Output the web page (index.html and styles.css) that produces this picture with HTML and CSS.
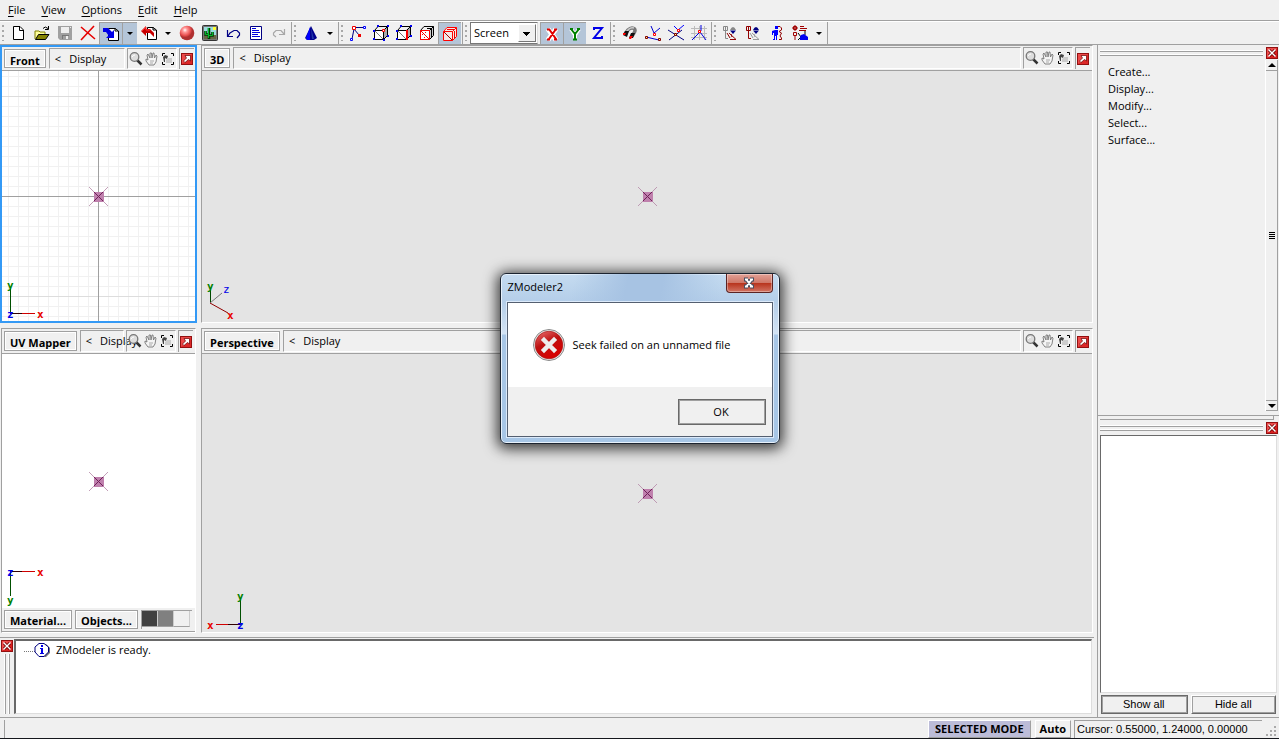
FILE: index.html
```html
<!DOCTYPE html>
<html lang="en">
<head>
<meta charset="utf-8">
<title>ZModeler2</title>
<link rel="stylesheet" href="styles.css">
</head>
<body>
<svg class="defs" aria-hidden="true">
  <symbol id="new" viewBox="0 0 16 16"><path d="M2.500 1.500H9L12.500 5V14.500H2.500Z" fill="#fff" stroke="#000"/><path d="M8.500 1.500V5.500H12.500" fill="none" stroke="#000"/></symbol>
  <symbol id="open" viewBox="0 0 16 16"><path d="M1 14V6H5L6 7H11V9" fill="#ffff9c" stroke="#808000"/><path d="M1.500 14.500L4.500 9.500H15L11.500 14.500Z" fill="#848200" stroke="#000"/><path d="M9 3.500Q11 0.500 14 3.500M14.500 1V4.500H11" fill="none" stroke="#000"/></symbol>
  <symbol id="save" viewBox="0 0 16 16"><path d="M1 1H15V15H3L1 13Z" fill="#a0a0a0"/><path d="M4 2H12V8H4Z" fill="#efefef"/><path d="M13 2h1v1h-1z M9 11h2v3H9z" fill="#efefef"/><path d="M5 10H12V11H6V14H5Z" fill="#777"/></symbol>
  <symbol id="del" viewBox="0 0 16 16"><path d="M1 2L15 14M14 1L1 15" stroke="#e60000" stroke-width="1.600" fill="none"/></symbol>
  <symbol id="imp" viewBox="0 0 16 16"><path d="M5.500 2.500H12L15.500 5V14.500H5.500Z" fill="#fff" stroke="#000"/><path d="M12 2V5H15" fill="none" stroke="#000"/><path d="M0 2H5L9 6L11 4V12H3L5.500 9.500L3 6H0Z" fill="#0000e8"/></symbol>
  <symbol id="exp" viewBox="0 0 16 16"><path d="M6.500 2.500H12L15.500 5V14.500H6.500Z" fill="#fff" stroke="#000"/><path d="M12 2V5H15" fill="none" stroke="#000"/><path d="M0 6L5 1V4H9L13 8V12L9 8H5V11Z" fill="#c80000"/><path d="M1 6L5 2V5H9" fill="none" stroke="#f33"/></symbol>
  <radialGradient id="ball" cx="36%" cy="30%"><stop offset="0" stop-color="#fff"/><stop offset=".3" stop-color="#ff9a9a"/><stop offset=".75" stop-color="#e85050"/><stop offset="1" stop-color="#b03030"/></radialGradient>
  <symbol id="sphere" viewBox="0 0 16 16"><circle cx="8" cy="8" r="7.300" fill="url(#ball)"/></symbol>
  <symbol id="cactus" viewBox="0 0 16 16"><rect x=".5" y=".5" width="15" height="15" rx="1" fill="#777" stroke="#333"/><path d="M2 2H14V10H2Z" fill="#9dd"/><path d="M2 10H14V14H2Z" fill="#664"/><path d="M11 2h3v3h-3z" fill="#ff3"/><path d="M7 14V3M7 10.500H10.500V7M7 9.500H3.500V6" stroke="#003800" stroke-width="2.600" fill="none"/><path d="M6.500 13V3M3.500 6V9.500H7M10.500 7V10.500H7" stroke="#00b828" fill="none"/></symbol>
  <symbol id="undo" viewBox="0 0 16 16"><path d="M2.500 5V11.500H8M3 11L5 8L9 5.500H12L14.500 8V10L12 13" fill="none" stroke="#000084" stroke-width="1.200"/></symbol>
  <symbol id="redo" viewBox="0 0 16 16"><path d="M13.500 4V9.500H8M13 9L10 5.500H5L2.500 8V10L5 12" fill="none" stroke="#a8a8a8" stroke-width="1.200"/></symbol>
  <symbol id="list" viewBox="0 0 16 16"><path d="M2.500 1.500H13.500V14.500H2.500Z" fill="#fff" stroke="#000084"/><path d="M4 3.500H8M4 5.500H11M4 7.500H12M4 9.500H10M4 11.500H12" stroke="#0000e0"/></symbol>
  <symbol id="cone" viewBox="0 0 16 16"><path d="M8 1L14 13L11 15H4L2 13Z" fill="#00008c"/><path d="M7 2V15H4L3 13Z" fill="#0000ff"/><path d="M8 3L11 14H9Z" fill="#2238a8"/></symbol>
  <symbol id="nodes" viewBox="0 0 16 16"><path d="M4 2.500H14M4 4L9 10M4 4L2 14" fill="none" stroke="#000080"/><path d="M2.500 1.500h3v3h-3z" fill="#fff" stroke="#e00"/><path d="M13.500 1.500h2v2h-2zM.5 13.500h2v2h-2z" fill="#fff" stroke="#00f"/><path d="M8 9h3v3H8z" fill="#e00"/></symbol>
  <symbol id="cube" viewBox="0 0 16 16"><path d="M1.500 5.500L5 1.500H14.500V10.500L10.500 14.500H1.500ZM1.500 5.500H10.500V14.500M10.500 5.500L14.500 1.500" fill="none"/></symbol>
  <symbol id="cubev" viewBox="0 0 16 16"><path d="M1 5H11V15H1Z" fill="#fff"/><path d="M10 5L15 1V10L10 14Z" fill="#aaa"/><use href="#cube" stroke="#000"/><path d="M2 6L10 14" stroke="#777"/><path d="M4 0h2v2H4zM14 0h2v2h-2zM0 5h2v2H0zM0 13h2v2H0zM10 14h2v2h-2zM14 10h2v2h-2z" fill="#00e"/><path d="M9.500 4.500h2v2h-2z" fill="#fff" stroke="#f00"/></symbol>
  <symbol id="cubee" viewBox="0 0 16 16"><path d="M1 5H11V15H1Z" fill="#fff"/><path d="M10 5L15 1V10L10 14Z" fill="#aaa"/><use href="#cube" stroke="#000"/><path d="M2 6L10 14" stroke="#777"/><path d="M11 5V15" stroke="#f00" stroke-width="2"/><path d="M4 0h2v2H4zM14 0h2v2h-2zM0 5h2v2H0zM0 13h2v2H0zM14 10h2v2h-2z" fill="#00e"/></symbol>
  <symbol id="cubef" viewBox="0 0 16 16"><path d="M10 5L15 1V10L10 14Z" fill="#ccc"/><use href="#cube" stroke="#000"/><path d="M8 3.500H12.500V12" fill="none" stroke="#000"/><path d="M1.500 5.500H10.500V14.500H1.500Z" fill="#fff" stroke="#f00"/><path d="M2 6L10 14" stroke="#f00"/><path d="M3 9h1v1H3zM6 7h1v1H6zM5 12h1v1H5z" fill="#f00"/></symbol>
  <symbol id="cubeo" viewBox="0 0 16 16"><path d="M1 5L5 1H15L14 11L10 15H1Z" fill="#f4e8e8"/><use href="#cube" stroke="#f00"/><path d="M12.500 5V12M5 3.500H12" stroke="#e00"/><path d="M2 6L10 14" stroke="#a00000"/></symbol>
  <symbol id="axx" viewBox="0 0 16 16"><path d="M4 3L12 14M12 3L4 14" stroke="#fff" stroke-width="5"/><path d="M5 3L12 13M12 3L5 13M3 3.500h3m4 0h3M3 13.500h3m4 0h3" stroke="#e00000" stroke-width="2" fill="none"/></symbol>
  <symbol id="axy" viewBox="0 0 16 16"><path d="M4 3L8 9L12 3M8 9V14" stroke="#fff" stroke-width="4" fill="none"/><path d="M4 3L8 8L12 3M8 8V13M3 3h3m4 0h3M6 13.500h4" stroke="#008000" stroke-width="2" fill="none"/></symbol>
  <symbol id="axz" viewBox="0 0 16 16"><path d="M4 5V3H12L4 13H12V11" stroke="#0000e8" stroke-width="2" fill="none"/></symbol>
  <symbol id="magnet" viewBox="0 0 16 16"><path d="M3 9L6 5Q9 2 12 3.500Q14 5 12 8L10 11" fill="none" stroke="#777" stroke-width="3.500"/><path d="M4 7L7 4Q9 2 12 3" fill="none" stroke="#ccc" stroke-width="1.500"/><path d="M1 10L3 6H7L5 12ZM7 13L9 8H13L11 13Z" fill="#111"/><path d="M1 8H4L3 10H1ZM8 11H11L9 14H7Z" fill="#f00"/></symbol>
  <symbol id="sn1" viewBox="0 0 16 16"><path d="M6 1L9 8L15 3M1 12L14 15" stroke="#0000d0" fill="none"/><path d="M8.500 8.500h2v2h-2z" fill="#fff" stroke="#f00"/><path d="M.5 11.500h2v2h-2zM13.500 13.500h2v2h-2z" fill="#ff8" stroke="#800000"/></symbol>
  <symbol id="sn2" viewBox="0 0 16 16"><path d="M6 1L10 5L16 0" stroke="#00f" fill="none"/><path d="M0 5L16 15M1 15L14 5" stroke="#000080"/><path d="M9.500 4.500h2v2h-2z" fill="#fff" stroke="#f00"/><path d="M6.500 8.500h2v2h-2z" fill="#ff8" stroke="#800000"/></symbol>
  <symbol id="sn3" viewBox="0 0 16 16"><path d="M3.500 1V15M8.500 1V15M13.500 1V15M0 3.500H16M0 8.500H16M0 12.500H16" stroke="#bbb"/><path d="M10 0V6L1 15M9 7L15 15" stroke="#0000e0" fill="none"/><path d="M7.500 5.500h2v2h-2z" fill="#fff" stroke="#f00"/></symbol>
  <symbol id="bone" viewBox="0 0 16 16"><path d="M.5 1.500H4.500V5.500H.5ZM2.500 2V13.500H5" fill="none" stroke="var(--a)"/><path d="M4 8L7 13M6 8L13 14.500H7M9 12L8 9" fill="none" stroke="var(--b)"/><path d="M7 5Q10 -1 13 5Z" fill="var(--c)"/><path d="M7 5.500H13L10 9Z" fill="#000080"/></symbol>
  <symbol id="man" viewBox="0 0 16 16"><path d="M6 1h3v3H6zM6 5H9V10H8V15H7V11H6V15H4V14H5V8H4V10H3V6Z" fill="#0000ff"/><path d="M9 1.500H11L12.500 3V5L10 6.500L12.500 8L11 11L12.500 13V14.500H10" fill="none" stroke="#900000"/></symbol>
  <symbol id="man2" viewBox="0 0 16 16"><path d="M1.500 1.500h3v3h-3zM3 0V6M0 3H6M8 1.500H12M8 3.500H15M7 5.500H14M1.500 7.500H4.500V10.500H1.500ZM3 10V15" fill="none" stroke="#a00000"/><path d="M6 8L9 12L6 15M13 6V10" stroke="#000" fill="none"/><path d="M9 10L12 9L16 12V15H8V12Z" fill="#0000f0"/></symbol>
  <symbol id="lens" viewBox="0 0 14 14"><path d="M8 8L12.500 12.500" stroke="#333" stroke-width="2.500"/><circle cx="5.500" cy="5" r="4.300" fill="#ddd" stroke="#777" stroke-width="1.300"/><path d="M3 5Q4 3 6 3" stroke="#fff" fill="none"/></symbol>
  <symbol id="hand" viewBox="0 0 14 14"><path d="M4 13L1 9V7L3 8L2 3L3 2L5 6V1H6.500L7 6L8 1H9L9.500 6L11 3L12 4L11 10L9 13Z" fill="#f4f4f4" stroke="#777" stroke-width=".9"/><path d="M5 9H9M5 11H8" stroke="#aaa"/></symbol>
  <symbol id="fit" viewBox="0 0 14 14"><path d="M4 1.500H1.500V4M10 1.500H12.500V4M1.500 10V12.500H4M12.500 10V12.500H10" fill="none" stroke="#000"/><path d="M2 5L4 3L7 4L6 7L4 6L4 10L3 10Z" fill="#444"/><path d="M7 6h4v5H5V8z" fill="#ccc"/></symbol>
  <symbol id="max" viewBox="0 0 12 12"><rect x=".5" y=".5" width="11" height="11" fill="#dc2828" stroke="#931010"/><path d="M1 11L11 1H1Z" fill="#ff7070" opacity=".45"/><path d="M4 2.500H9.500V8L7.500 6.500L4 9.500L2.500 8L5.500 5Z" fill="#fff" stroke="#600" stroke-width=".7"/></symbol>
  <symbol id="close" viewBox="0 0 12 12"><rect x=".5" y=".5" width="11" height="11" fill="#d92020" stroke="#931010"/><path d="M1 11L11 1H1Z" fill="#ff7878" opacity=".5"/><path d="M3 3L9 9M9 3L3 9" stroke="#600" stroke-width="3"/><path d="M2.500 2.500L9.500 9.500M9.500 2.500L2.500 9.500" stroke="#fff" stroke-width="1.400"/></symbol>
  <symbol id="pivot" viewBox="0 0 21 21"><path d="M6 6H16V16H6Z" fill="#bf80ad"/><path d="M1 1L20 20M20 1L1 20" stroke="#b486a6" stroke-width=".8"/><path d="M6 6L15 15M15 6L6 15" stroke="#702058"/></symbol>
</svg>

<nav class="menubar">
  <button><u>F</u>ile</button><button><u>V</u>iew</button><button><u>O</u>ptions</button><button><u>E</u>dit</button><button><u>H</u>elp</button>
</nav>

<div class="toolbar">
  <div class="group">
    <button class="tool" aria-label="New"><svg><use href="#new"/></svg></button>
    <button class="tool" aria-label="Open"><svg><use href="#open"/></svg></button>
    <button class="tool" aria-label="Save"><svg><use href="#save"/></svg></button>
    <button class="tool" aria-label="Delete"><svg><use href="#del"/></svg></button>
    <button class="tool on" aria-label="Import"><svg><use href="#imp"/></svg></button>
    <button class="drop on" aria-label="Import options"></button>
    <button class="tool" aria-label="Export"><svg><use href="#exp"/></svg></button>
    <button class="drop" aria-label="Export options"></button>
    <button class="tool" aria-label="Materials"><svg><use href="#sphere"/></svg></button>
    <button class="tool" aria-label="Textures"><svg><use href="#cactus"/></svg></button>
    <button class="tool" aria-label="Undo"><svg><use href="#undo"/></svg></button>
    <button class="tool" aria-label="History"><svg><use href="#list"/></svg></button>
    <button class="tool" aria-label="Redo"><svg><use href="#redo"/></svg></button>
  </div>
  <div class="group">
    <button class="tool" aria-label="Cone"><svg><use href="#cone"/></svg></button>
    <button class="drop" aria-label="Primitives"></button>
  </div>
  <div class="group">
    <button class="tool" aria-label="Nodes"><svg><use href="#nodes"/></svg></button>
    <button class="tool" aria-label="Vertices"><svg><use href="#cubev"/></svg></button>
    <button class="tool" aria-label="Edges"><svg><use href="#cubee"/></svg></button>
    <button class="tool" aria-label="Faces"><svg><use href="#cubef"/></svg></button>
    <button class="tool on" aria-label="Objects"><svg><use href="#cubeo"/></svg></button>
  </div>
  <div class="group">
    <div class="combo"><select aria-label="Coordinate space"><option>Screen</option></select></div>
    <button class="tool on" aria-label="X axis"><svg><use href="#axx"/></svg></button>
    <button class="tool on" aria-label="Y axis"><svg><use href="#axy"/></svg></button>
    <button class="tool" aria-label="Z axis"><svg><use href="#axz"/></svg></button>
  </div>
  <div class="group">
    <button class="tool" aria-label="Snap"><svg><use href="#magnet"/></svg></button>
    <button class="tool" aria-label="Snap to vertex"><svg><use href="#sn1"/></svg></button>
    <button class="tool" aria-label="Snap to edge"><svg><use href="#sn2"/></svg></button>
    <button class="tool" aria-label="Snap to grid"><svg><use href="#sn3"/></svg></button>
  </div>
  <div class="group">
    <button class="tool bone-red" aria-label="Bones"><svg><use href="#bone"/></svg></button>
    <button class="tool bone-gray" aria-label="Skin"><svg><use href="#bone"/></svg></button>
    <button class="tool" aria-label="Figure"><svg><use href="#man"/></svg></button>
    <button class="tool" aria-label="Animation"><svg><use href="#man2"/></svg></button>
    <button class="drop" aria-label="Animation options"></button>
  </div>
</div>

<main class="main">
  <div class="work">
    <div class="views">
      <section class="view active">
        <header class="head">
          <button class="name">Front</button>
          <div class="crumb"><button>&lt;</button><button>Display</button></div>
          <div class="tools"><button aria-label="Zoom"><svg><use href="#lens"/></svg></button><button aria-label="Pan"><svg><use href="#hand"/></svg></button><button aria-label="Fit"><svg><use href="#fit"/></svg></button></div>
          <button class="max" aria-label="Maximize"><svg><use href="#max"/></svg></button>
        </header>
        <div class="canvas gridded">
          <svg class="pivot"><use href="#pivot"/></svg>
          <svg class="gizmo" viewBox="0 0 44 44"><path d="M8.500 12V37" stroke="#005000"/><path d="M8 36.500H20" stroke="#300000"/><path d="M20 36.500H33" stroke="#d00000"/><text x="5" y="12" class="gy">y</text><text x="35" y="41" class="gx">x</text><text x="5" y="41" class="gz">z</text></svg>
        </div>
      </section>
      <section class="view">
        <header class="head">
          <button class="name">3D</button>
          <div class="crumb"><button>&lt;</button><button>Display</button></div>
          <div class="tools"><button aria-label="Zoom"><svg><use href="#lens"/></svg></button><button aria-label="Pan"><svg><use href="#hand"/></svg></button><button aria-label="Fit"><svg><use href="#fit"/></svg></button></div>
          <button class="max" aria-label="Maximize"><svg><use href="#max"/></svg></button>
        </header>
        <div class="canvas shaded">
          <svg class="pivot"><use href="#pivot"/></svg>
          <svg class="gizmo" viewBox="0 0 44 44"><path d="M8.500 12V25" stroke="#004800"/><path d="M8 25L20 15" stroke="#777"/><path d="M8 25L26 35" stroke="#900000"/><text x="5" y="12" class="gy">y</text><text x="25" y="41" class="gx">x</text><text x="21" y="15" class="gz thin">z</text></svg>
        </div>
      </section>
      <section class="view">
        <header class="head">
          <button class="name">UV Mapper</button>
          <div class="crumb"><button>&lt;</button><button>Display</button></div>
          <div class="tools"><button aria-label="Zoom"><svg><use href="#lens"/></svg></button><button aria-label="Pan"><svg><use href="#hand"/></svg></button><button aria-label="Fit"><svg><use href="#fit"/></svg></button></div>
          <button class="max" aria-label="Maximize"><svg><use href="#max"/></svg></button>
        </header>
        <div class="canvas">
          <svg class="pivot"><use href="#pivot"/></svg>
          <svg class="gizmo" viewBox="0 0 44 44"><path d="M8.500 8V32" stroke="#005000"/><path d="M8 7.500H20" stroke="#300000"/><path d="M20 7.500H33" stroke="#d00000"/><text x="5" y="40" class="gy">y</text><text x="35" y="12" class="gx">x</text><text x="5" y="12" class="gz">z</text></svg>
        </div>
        <footer class="foot">
          <button class="name">Material...</button>
          <button class="name">Objects...</button>
          <div class="swatches"><i class="dark"></i><i class="mid"></i><i></i></div>
        </footer>
      </section>
      <section class="view">
        <header class="head">
          <button class="name">Perspective</button>
          <div class="crumb"><button>&lt;</button><button>Display</button></div>
          <div class="tools"><button aria-label="Zoom"><svg><use href="#lens"/></svg></button><button aria-label="Pan"><svg><use href="#hand"/></svg></button><button aria-label="Fit"><svg><use href="#fit"/></svg></button></div>
          <button class="max" aria-label="Maximize"><svg><use href="#max"/></svg></button>
        </header>
        <div class="canvas shaded">
          <svg class="pivot"><use href="#pivot"/></svg>
          <svg class="gizmo" viewBox="0 0 44 44"><path d="M38.500 12V37" stroke="#005000"/><path d="M26 36.500H38" stroke="#300000"/><path d="M14 36.500H26" stroke="#d00000"/><text x="35" y="12" class="gy">y</text><text x="5" y="41" class="gx">x</text><text x="35" y="41" class="gz">z</text></svg>
        </div>
      </section>
    </div>
    <section class="log">
      <div class="log-bar">
        <button class="shut" aria-label="Close log"><svg><use href="#close"/></svg></button>
        <div class="vgrip"></div>
      </div>
      <div class="log-list">
        <p class="entry"><svg viewBox="0 0 28 16"><path d="M0 9.500H12" stroke="#777" stroke-dasharray="1 1"/><path d="M17 2L22 2L26 6V11L22 15H17" fill="#777"/><path d="M15 1.500H20L24.500 5V10L20 14.500H15L11 10V5Z" fill="#fff" stroke="#000080"/><path d="M17 3h2v2h-2zM16 6h3v5h1v1h-4v-1h1V7h-1z" fill="#0000e8"/></svg>ZModeler is ready.</p>
      </div>
    </section>
  </div>
  <aside class="dock">
    <section class="panel commands">
      <header class="panel-head"><div class="hgrip"></div><button class="shut" aria-label="Close commands"><svg><use href="#close"/></svg></button></header>
      <div class="panel-body">
        <ul class="cmds"><li><button>Create...</button></li><li><button>Display...</button></li><li><button>Modify...</button></li><li><button>Select...</button></li><li><button>Surface...</button></li></ul>
        <div class="scroll"><button class="up" aria-label="Scroll up"></button><span class="thumb"></span><button class="down" aria-label="Scroll down"></button></div>
      </div>
    </section>
    <section class="panel objects">
      <div class="splitter"></div>
      <header class="panel-head"><div class="hgrip"></div><button class="shut" aria-label="Close objects"><svg><use href="#close"/></svg></button></header>
      <div class="tree"></div>
      <div class="pair"><button class="push default">Show all</button><button class="push">Hide all</button></div>
    </section>
  </aside>
</main>

<footer class="status">
  <span class="lead"></span>
  <button class="mode">SELECTED MODE</button>
  <button class="auto">Auto</button>
  <span class="cursor">Cursor: 0.55000, 1.24000, 0.00000</span>
  <svg class="sizer" viewBox="0 0 14 14"><path d="M10 2h2v2h-2zM6 6h2v2H6zM10 6h2v2h-2zM2 10h2v2H2zM6 10h2v2H6zM10 10h2v2h-2z" fill="#aaa"/></svg>
</footer>

<div class="dialog" role="dialog" aria-labelledby="dlg-title">
  <header class="dialog-title"><span id="dlg-title">ZModeler2</span>
    <button class="dialog-close" aria-label="Close"><svg viewBox="0 0 14 12"><path d="M4 2L10 10M10 2L4 10M2 2.500H6M8 2.500H12M2 9.500H6M8 9.500H12" stroke="#4a4f60" stroke-width="4"/><path d="M4 2L10 10M10 2L4 10M3 2.500H6M8 2.500H11M3 9.500H6M8 9.500H11" stroke="#fff" stroke-width="2"/></svg></button>
  </header>
  <div class="dialog-body">
    <div class="message">
      <svg viewBox="0 0 32 32"><defs><linearGradient id="err" x2=".5" y2="1"><stop offset="0" stop-color="#ee7777"/><stop offset=".5" stop-color="#bd1111"/><stop offset="1" stop-color="#d80000"/></linearGradient></defs><circle cx="16" cy="16" r="15.500" fill="#eee" stroke="#888"/><circle cx="16" cy="16" r="13.800" fill="url(#err)" stroke="#a81414" stroke-width=".7"/><path d="M11 11L21 21M21 11L11 21" stroke="#eee" stroke-width="4.500" stroke-linecap="square"/></svg>
      <p>Seek failed on an unnamed file</p>
    </div>
    <div class="actions"><button class="push default">OK</button></div>
  </div>
</div>
</body>
</html>
```

FILE: styles.css
```css
* { box-sizing: border-box; }
body {
  margin: 0;
  height: 100vh;
  display: flex;
  flex-direction: column;
  overflow: hidden;
  background: #f0f0f0;
  color: #000;
  font: 11px/16px "Open Sans", "Noto Sans", sans-serif;
  border-bottom: 1px solid #15171c;
}
button { font: inherit; color: inherit; background: none; border: 0; padding: 0; margin: 0; }
p, ul { margin: 0; padding: 0; list-style: none; }
svg { display: block; flex: none; }
.defs { position: absolute; width: 0; height: 0; }

.menubar { height: 21px; flex: none; display: flex; gap: 16px; padding: 0 8px; border-bottom: 1px solid #a0a0a0; }
.menubar u { text-underline-offset: 2px; }

.toolbar { height: 24px; flex: none; display: flex; border-top: 1px solid #fff; border-bottom: 1px solid #a0a0a0; }
.group { display: flex; padding-right: 1px; border-right: 1px solid #a0a0a0; }
.group::before { content: ""; width: 2px; margin: 3px 3px 3px 2px; background: repeating-linear-gradient(#a8a8a8 0 2px, transparent 2px 5px); }
.tool { width: 23px; display: grid; place-items: center; }
.tool svg { width: 16px; height: 16px; }
.on { background: #b4c5d8; border-left: 1px solid #a0a0a0; border-top: 1px solid #a0a0a0; }
.drop { width: 15px; display: grid; place-items: center; }
.drop::before { content: ""; border: 3px solid transparent; border-top-color: #000; border-bottom: 0; }
.bone-red { --a: #888; --b: #900000; --c: #888; }
.bone-gray { --a: #900000; --b: #999; --c: #000080; }
.combo { width: 68px; margin-right: 2px; position: relative; border: 1px solid #777; border-right-color: #ddd; background: #fff; }
.combo select { width: 100%; height: 100%; appearance: none; border: 0; background: none; font: inherit; padding: 0 3px; }
.combo::after {
  content: "";
  position: absolute;
  right: 1px;
  top: 1px;
  bottom: 1px;
  width: 16px;
  border: 1px solid #fff;
  border-right-color: #777;
  border-bottom-color: #777;
  background:
    linear-gradient(#000, #000) 4px 7px / 7px 1px no-repeat,
    linear-gradient(#000, #000) 5px 8px / 5px 1px no-repeat,
    linear-gradient(#000, #000) 6px 9px / 3px 1px no-repeat,
    linear-gradient(#000, #000) 7px 10px / 1px 1px no-repeat,
    #f0f0f0;
  pointer-events: none;
}

.main { flex: 1; min-height: 0; display: flex; }
.work { flex: 1; min-width: 0; display: flex; flex-direction: column; padding-right: 1px; }
.views { flex: 1; min-height: 0; display: grid; grid-template-columns: 197px 1fr; grid-template-rows: 278fr 305fr; gap: 5px 4px; padding-bottom: 4px; }
.view { min-width: 0; min-height: 0; display: flex; flex-direction: column; border: 1px solid #a0a0a0; border-right-color: #fff; border-bottom-color: #fff; margin-right: 1px; }
.view:nth-child(odd) { margin-left: 1px; }
.view.active { border: 2px solid #3399f5; margin: 0; }
.active .head { height: 24px; }
.head { height: 25px; flex: none; display: flex; gap: 2px; padding: 1px 2px 1px 1px; border-bottom: 1px solid #a0a0a0; background: #f0f0f0; }
.active .head { padding-right: 1px; }
.name { padding: 3px 5px 0; font-weight: 700; border: 1px solid #a0a0a0; outline: 1px solid #fff; outline-offset: -2px; white-space: nowrap; margin: 1px; }
.crumb { flex: 1; min-width: 0; display: flex; gap: 8px; padding: 0 5px; border: 1px solid #a0a0a0; border-right-color: #fff; border-bottom-color: #fff; }
.tools { display: flex; gap: 2px; align-items: center; padding: 0 1px; border: 1px solid #a0a0a0; border-right-color: #fff; border-bottom-color: #fff; }
.tools svg { width: 14px; height: 14px; }
.max { padding: 0 1px; border-left: 1px solid #a0a0a0; border-top: 1px solid #a0a0a0; }
.max svg, .shut svg { width: 12px; height: 12px; }
.canvas { flex: 1; min-height: 0; position: relative; display: grid; place-items: center; background: #fff; }
.shaded { background: #e4e4e4; }
.gridded {
  background:
    linear-gradient(#a0a0a0, #a0a0a0) 50% 50% / 1px 100% no-repeat,
    linear-gradient(#a0a0a0, #a0a0a0) 50% 50% / 100% 1px no-repeat,
    linear-gradient(#ddd 1px, transparent 1px) 0 25px / 100px 100px,
    linear-gradient(to right, #f1f1f1 1px, transparent 1px) 6px 0 / 10px 10px,
    linear-gradient(#f1f1f1 1px, transparent 1px) 0 5px / 10px 10px,
    #fff;
}
.pivot { width: 21px; height: 21px; }
.gizmo { position: absolute; left: 0; bottom: 0; width: 44px; height: 44px; font: bold 11px "DejaVu Sans Mono", monospace; }
.gx { fill: #e80000; }
.gy { fill: #008000; }
.gz { fill: #0000e8; }
.thin { font-weight: 400; }
.foot { height: 24px; flex: none; display: flex; gap: 1px; padding: 1px 2px 1px 1px; border-bottom: 1px solid #a0a0a0; background: #f0f0f0; }
.foot .name { padding-top: 2px; }
.swatches { flex: 1; display: flex; margin: 1px; border-left: 1px solid #a0a0a0; border-top: 1px solid #a0a0a0; }
.swatches i { width: 16px; height: 16px; border-right: 1px solid #ccc; border-bottom: 1px solid #a0a0a0; }
.swatches .dark { background: #404040; }
.swatches .mid { background: #808080; }

.log { height: 80px; flex: none; display: flex; border-top: 1px solid #a0a0a0; padding: 1px 2px 3px 0; }
.log-bar { width: 14px; display: flex; flex-direction: column; align-items: center; gap: 2px; padding-top: 1px; }
.shut { flex: none; }
.vgrip { flex: 1; width: 6px; background: linear-gradient(to right, #fff 1px, #a0a0a0 1px 2px, transparent 2px 4px, #fff 4px 5px, #a0a0a0 5px); }
.log-list { flex: 1; background: #fff; border: 2px solid #696969; border-right: 1px solid #ddd; border-bottom: 1px solid #ddd; padding: 1px 8px; }
.entry { display: flex; gap: 4px; }
.entry svg { width: 28px; height: 16px; }

.dock { width: 184px; flex: none; display: flex; flex-direction: column; padding-left: 2px; }
.panel { display: flex; flex-direction: column; min-height: 0; border-left: 1px solid #a0a0a0; padding-left: 2px; }
.commands { flex: 370; border-bottom: 1px solid #a0a0a0; padding-bottom: 4px; }
.objects { flex: 301; padding-bottom: 3px; }
.panel-head { display: flex; align-items: center; gap: 3px; padding: 2px 1px 1px 0; }
.splitter { height: 4px; flex: none; margin-right: 5px; border-right: 1px solid #a0a0a0; border-bottom: 1px solid #a0a0a0; }
.hgrip { flex: 1; height: 6px; background: linear-gradient(#fff 1px, #a0a0a0 1px 2px, transparent 2px 4px, #fff 4px 5px, #a0a0a0 5px); }
.panel-body { flex: 1; min-height: 0; display: flex; }
.cmds { flex: 1; padding: 3px 8px; line-height: 17px; }
.scroll { width: 13px; display: flex; flex-direction: column; justify-content: space-between; align-items: center; margin-right: 1px; border-left: 1px solid #fff; border-right: 1px solid #a0a0a0; }
.up, .down { width: 11px; height: 11px; display: grid; place-items: center; border-bottom: 1px solid #a0a0a0; }
.down { border-top: 1px solid #a0a0a0; }
.up::before, .down::before { content: ""; border: 4px solid transparent; border-bottom-color: #000; border-top: 0; }
.down::before { border-top: 4px solid #000; border-bottom: 0; }
.thumb { width: 6px; height: 7px; background: repeating-linear-gradient(#000 0 1px, transparent 1px 2px); }
.tree { flex: 1; background: #fff; border: 1px solid #696969; border-right-color: #ddd; border-bottom-color: #ddd; margin-right: 2px; }
.pair { display: flex; gap: 3px; padding: 2px 3px 0 1px; }
.pair .push { flex: 1; height: 19px; line-height: 15px; font-family: "Liberation Sans", Arial, sans-serif; }
.push { border: 1px solid #fff; border-right-color: #696969; border-bottom-color: #696969; outline: 1px solid #a0a0a0; outline-offset: -2px; background: #f0f0f0; }
.push.default { border: 1px solid #696969; border-right-width: 2px; border-bottom-width: 2px; }

.status { height: 21px; flex: none; display: flex; align-items: stretch; border-top: 1px solid #a0a0a0; padding: 2px 1px 0 4px; }
.lead { width: 1px; background: #a0a0a0; margin-right: auto; }
.mode, .auto { font-weight: 700; border: 1px solid #fff; border-right-color: #a0a0a0; border-bottom-color: #a0a0a0; margin-right: 4px; padding: 0 6px; }
.mode { background: #bcbcd8; }
.auto { margin-right: 3px; padding: 0 4px; }
.cursor { width: 188px; border-left: 1px solid #a0a0a0; border-top: 1px solid #a0a0a0; padding-left: 2px; font: 11px/16px "Liberation Sans", Arial, sans-serif; white-space: nowrap; }
.sizer { width: 14px; height: 14px; align-self: flex-end; margin-left: 2px; }

.dialog {
  position: absolute;
  left: calc(50% - 140px);
  top: 273px;
  width: 280px;
  padding: 0 6px 6px;
  border: 1px solid #1c2430;
  border-radius: 6px;
  background: linear-gradient(#c5dbf0 0, #b4cee9 28px, #d3e3f4 60px, #a7c6e6 61px, #a7c6e6);
  box-shadow: inset 0 0 0 1px #e7f1fb, 0 2px 14px 3px rgba(0, 0, 0, .75);
}
.dialog-title { height: 28px; display: flex; justify-content: space-between; padding: 5px 0 0 1px; background: linear-gradient(100deg, transparent 25%, #a7c3e3 45%, #a7c3e3 58%, transparent 80%); }
.dialog-close { width: 47px; height: 19px; margin-top: -5px; display: grid; place-items: center; border: 1px solid #5b2323; border-top: 0; border-radius: 0 0 4px 4px; background: linear-gradient(#e3a196, #cf7869 48%, #b7321b 50%, #d27464); box-shadow: inset 0 0 0 1px rgba(255, 255, 255, .35); }
.dialog-close svg { width: 14px; height: 12px; }
.dialog-body { border: 1px solid #545f70; outline: 1px solid #dceafa; background: #f0f0f0; }
.message { height: 84px; display: flex; align-items: center; gap: 8px; padding: 0 25px; background: #fff; }
.message svg { width: 32px; height: 32px; }
.actions { display: flex; justify-content: flex-end; padding: 12px 6px 11px; }
.actions .push { width: 88px; height: 26px; }
```
